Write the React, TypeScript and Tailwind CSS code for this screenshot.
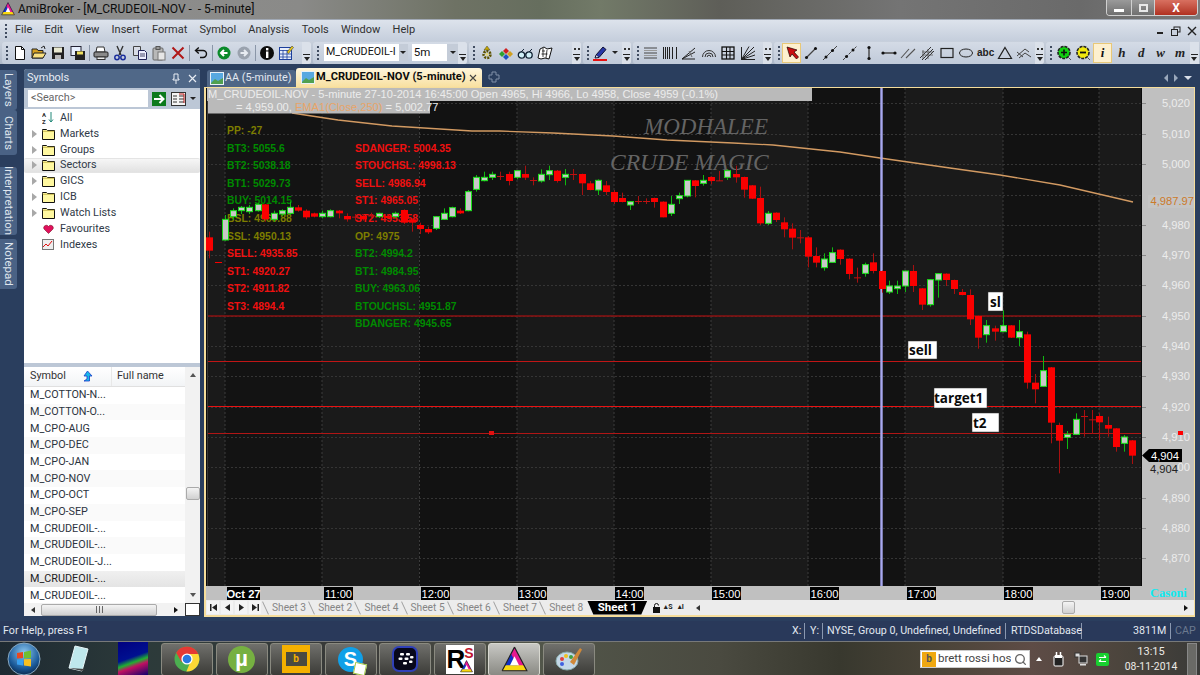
import React from "react";
import { Search } from "lucide-react";

type C = [number, number, number, number, number, string];
const z5: C[] = [
  [13,425,442,482,505,"d"],[38,516,516,518,518,"d"],[60,375,388,450,452,"u"],[84,355,362,380,390,"u"],[108,348,352,362,372,"u"],[133,345,352,365,372,"u"],[158,340,343,362,365,"u"],[181,342,343,388,395,"d"],[206,362,370,388,395,"u"],[230,358,362,372,378,"u"],[255,335,352,370,375,"u"],[279,345,352,362,365,"d"],[303,358,362,382,388,"d"],[327,368,370,380,382,"d"],[352,362,370,380,385,"u"],[376,358,362,380,382,"u"],[401,360,362,370,385,"d"],[425,370,378,388,395,"d"],[449,372,380,382,392,"c"],[473,372,378,388,392,"d"],[498,368,376,380,385,"c"],[522,368,370,380,384,"u"],[546,372,378,384,388,"d"],[571,365,370,380,385,"u"],[596,358,360,398,402,"d"],[620,385,388,398,425,"d"],[644,398,405,417,432,"d"],[668,410,417,427,432,"d"],[692,378,380,415,420,"u"],[716,355,370,388,390,"u"],[740,350,353,380,382,"u"],[765,355,362,370,372,"d"],[789,300,305,362,364,"u"],[814,255,262,298,305,"u"],[838,245,262,272,274,"u"],[862,245,253,262,270,"u"],[886,245,258,260,270,"c"],
];
const z6: C[] = [
  [26,215,222,243,256,"d"],[50,210,212,232,238,"u"],[75,197,222,233,240,"d"],[98,232,240,242,256,"c"],[122,208,223,243,248,"u"],[147,197,212,224,240,"u"],[172,210,212,243,248,"d"],[196,207,223,232,256,"u"],[220,207,222,224,240,"c"],[245,221,222,250,285,"d"],[270,243,250,270,271,"d"],[293,238,241,270,285,"u"],[317,243,256,276,285,"d"],[341,270,276,306,312,"d"],[366,278,294,306,307,"d"],[390,303,305,315,330,"u"],[414,288,303,305,312,"c"],[438,295,303,305,312,"c"],[462,293,294,306,323,"d"],[488,304,305,352,352,"d"],[512,288,313,340,348,"u"],[536,278,287,296,312,"u"],[560,240,241,288,292,"u"],[586,240,241,258,292,"d"],[609,225,241,250,257,"u"],[633,229,231,243,253,"d"],[657,213,241,243,243,"c"],[681,208,212,232,240,"u"],[707,197,222,232,248,"d"],[731,230,231,269,293,"d"],[755,255,256,296,297,"d"],[779,260,294,370,375,"d"],[804,333,340,370,375,"u"],[828,337,338,360,366,"d"],[852,352,367,388,412,"d"],[876,370,386,413,448,"d"],[900,390,412,414,430,"c"],
];
const z7: C[] = [
  [85,18,22,80,112,"d"],[109,52,78,98,112,"d"],[133,70,87,113,122,"u"],[157,52,68,97,98,"u"],[181,58,59,87,104,"d"],[206,85,86,132,148,"d"],[230,113,142,144,158,"c"],[254,98,104,130,140,"u"],[278,70,97,123,130,"d"],[305,122,123,177,188,"d"],[328,152,168,186,192,"u"],[352,152,168,176,192,"u"],[376,122,123,168,186,"u"],[400,105,123,168,186,"d"],[426,174,175,224,240,"d"],[450,148,149,224,230,"u"],[474,130,131,150,203,"u"],[498,130,131,150,168,"d"],[523,149,150,177,192,"d"],[547,177,186,195,196,"d"],[571,178,195,268,285,"d"],[595,257,258,323,356,"d"],[619,270,287,314,338,"u"],[644,287,295,305,332,"d"],[668,240,287,305,306,"u"],[692,285,286,323,324,"d"],[716,270,305,323,348,"u"],[740,305,313,458,476,"d"],[765,432,458,478,520,"d"],[789,378,422,469,470,"u"],[813,411,412,578,640,"d"],[837,578,585,632,730,"d"],[862,603,613,622,657,"u"],[887,550,568,613,615,"u"],[911,540,558,560,620,"c"],[935,540,568,570,612,"c"],[958,550,558,577,630,"d"],[984,560,585,596,620,"d"],[1008,594,595,651,665,"d"],[1032,615,621,640,665,"u"],[1056,630,631,677,702,"d"],
];
const conv = (a: C[], ox: number, oy: number) => a.map(([x, wt, t, b, wb, k]) => ({ x: Math.round(x / 3 + ox), wt: wt / 3 + oy, t: t / 3 + oy, b: b / 3 + oy, wb: wb / 3 + oy, k }));
const candles = [...conv(z5, 205, 90), ...conv(z6, 500, 100), ...conv(z7, 780, 230)];

const vGrid = [225, 322, 419.5, 517, 614, 711, 808, 905, 1003, 1099];
const bands: [number, number, string][] = [[207,225,"#1a1a1a"],[225,322,"#131313"],[322,419,"#1a1a1a"],[419,517,"#121212"],[517,614,"#191919"],[614,711,"#121212"],[711,808,"#1a1a1a"],[808,905,"#121212"],[905,1003,"#1a1a1a"],[1003,1099,"#121212"],[1099,1141,"#1a1a1a"]];
const yLabels: [string, number][] = [["5,020",103],["5,010",134],["5,000",164],["4,980",225],["4,970",255],["4,960",285],["4,950",316],["4,940",346],["4,930",376],["4,920",407],["4,910",437],["4,890",498],["4,880",528],["4,870",558]];
const hours: [string, number, number][] = [["11:00",324,29],["12:00",421,29],["13:00",518,29],["14:00",615,29],["15:00",712,29],["16:00",810,29],["17:00",907,29],["18:00",1004,29],["19:00",1101,29]];

const leftCol: [string, string, number][] = [
  ["PP: -27","#7d7d00",130],["BT3: 5055.6","#008a00",147.5],["BT2: 5038.18","#008a00",165],["BT1: 5029.73","#008a00",182.5],["BUY: 5014.15","#008a00",200],["BSL: 4960.88","#7d7d00",218],["SSL: 4950.13","#7d7d00",235.5],["SELL: 4935.85","#f01010",253],["ST1: 4920.27","#f01010",270.5],["ST2: 4911.82","#f01010",288],["ST3: 4894.4","#f01010",305.5],
];
const rightCol: [string, string, number][] = [
  ["SDANGER: 5004.35","#f01010",147.5],["STOUCHSL: 4998.13","#f01010",165],["SELL: 4986.94","#f01010",182.5],["ST1: 4965.05","#f01010",200],["ST2: 4953.58","#f01010",218],["OP: 4975","#7d7d00",235.5],["BT2: 4994.2","#008a00",253],["BT1: 4984.95","#008a00",270.5],["BUY: 4963.06","#008a00",288],["BTOUCHSL: 4951.87","#008a00",305.5],["BDANGER: 4945.65","#008a00",323],
];

function Chart() {
  return (
    <svg viewBox="206 88 988 512" className="block w-[988px] h-[512px] shrink-0">
      <rect x="206" y="88" width="988" height="512" fill="#c0c0c0" />
      <rect x="206" y="88" width="936" height="498" fill="#0b0b0b" />
      {bands.map(([a, b, c]) => <rect key={a} x={a} y="88" width={b - a} height="498" fill={c} />)}
      <line x1="207.5" y1="88" x2="207.5" y2="586" stroke="#3a3a3a" />
      {vGrid.map((x) => <line key={x} x1={x} y1="88" x2={x} y2="586" stroke="#3c3c3c" strokeDasharray="2 2" />)}
      {[103,134,164,195,225,255,285,316,346,376,407,437,467,498,528,558].map((y) => <line key={y} x1="207" y1={y + 0.5} x2="1141" y2={y + 0.5} stroke="#353535" strokeDasharray="2 2" />)}
      <g className="font-['Liberation_Serif',serif] italic" fill="#646464">
        <text x="644" y="134" className="text-[23px]">MODHALEE</text>
        <text x="610" y="170" className="text-[23.5px]">CRUDE MAGIC</text>
      </g>
      <polyline fill="none" stroke="#d29a62" strokeWidth="1.3" points="292,113 338,120 392,126 472,131 500,131 553,133 613,136 667,140 733,143 773,145 840,152 880,158 950,168 1000,175 1060,185 1133,202" />
      <g className="font-['Liberation_Sans',Arial,sans-serif] font-bold text-[10.4px]">
        {leftCol.map(([t, c, y]) => <text key={t} x="227" y={y + 4} fill={c}>{t}</text>)}
        {rightCol.map(([t, c, y]) => <text key={t} x="355" y={y + 4} fill={c}>{t}</text>)}
      </g>
      <line x1="208" y1="316" x2="1141" y2="316" stroke="#8c1212" strokeWidth="1.6" />
      <line x1="208" y1="361.5" x2="1141" y2="361.5" stroke="#c01616" />
      <line x1="208" y1="406.5" x2="1141" y2="406.5" stroke="#e81212" strokeWidth="1.2" />
      <line x1="208" y1="433.5" x2="1141" y2="433.5" stroke="#b01616" />
      <rect x="489" y="431" width="5" height="4" fill="#e01010" />
      <line x1="881.5" y1="88" x2="881.5" y2="586" stroke="#a8a8f0" strokeWidth="2.4" />
      {candles.map((c, i) => {
        const up = c.k === "u";
        const cross = c.k === "c";
        return (
          <g key={i}>
            <line x1={c.x + 0.5} x2={c.x + 0.5} y1={c.wt} y2={c.wb} stroke={up ? "#10b810" : "#a81010"} />
            {cross ? (
              <line x1={c.x - 3} x2={c.x + 4} y1={c.t + 0.5} y2={c.t + 0.5} stroke="#c01010" />
            ) : up ? (
              <rect x={c.x - 2.5} y={c.t} width="6" height={Math.max(c.b - c.t, 2)} fill="#c8c8c8" stroke="#18e018" strokeWidth="1" />
            ) : (
              <rect x={c.x - 3} y={c.t} width="7" height={Math.max(c.b - c.t, 1)} fill="#fa0000" />
            )}
          </g>
        );
      })}
      <rect x="207" y="88" width="605" height="13" fill="#bababa" />
      <rect x="208" y="101" width="222" height="12.5" fill="#bababa" />
      <g className="font-['Liberation_Sans',Arial,sans-serif] text-[11.1px]" fill="#ececec">
        <text x="208" y="98">M_CRUDEOIL-NOV - 5-minute 27-10-2014 16:45:00 Open 4965, Hi 4966, Lo 4958, Close 4959 (-0.1%)</text>
        <text x="236" y="111">= 4,959.00, <tspan fill="#e8a468">EMA1(Close,250)</tspan> = 5,002.77</text>
      </g>
      <g className="font-['Open_Sans',sans-serif] font-bold" fill="#0a0a0a">
        {([["sl",988,292,15,19,990,307],["sell",908,341,29,18,909,355],["target1",934,388,53,20,934,403],["t2",972,413,27,19,973,428]] as [string,number,number,number,number,number,number][]).map(([t,x,y,w,h,tx,ty]) => (
          <g key={t}>
            <rect x={x} y={y} width={w} height={h} fill="#fff" stroke="#333" strokeWidth="0.5" />
            <text x={tx} y={ty} className="text-[13.5px]">{t}</text>
          </g>
        ))}
      </g>
      <g className="font-['Liberation_Sans',Arial,sans-serif] text-[11.2px]">
        {yLabels.map(([t, y]) => (
          <g key={t}>
            <line x1="1142" x2="1146" y1={y + 0.5} y2={y + 0.5} stroke="#8a8a8a" />
            <text x="1190" y={y + 4} textAnchor="end" fill="#ececec">{t}</text>
          </g>
        ))}
        <rect x="1148" y="195" width="46" height="13" fill="#c4c4c4" />
        <text x="1194" y="205" textAnchor="end" fill="#cc7a2a">4,987.97</text>
        <text x="1190" y="471" textAnchor="end" fill="#ececec">00</text>
        <text x="1178" y="473" textAnchor="end" fill="#222">4,904</text>
        <path d="M1142 455.5 L1149 449 H1182 V462 H1149 Z" fill="#000" />
        <text x="1179" y="460" textAnchor="end" fill="#fff">4,904</text>
        <rect x="1178" y="431" width="5" height="4" fill="#f00" />
        {hours.map(([t, x, w]) => (
          <g key={t}>
            <rect x={x} y="587" width={w} height="13" fill="#000" />
            <text x={x + 14.5} y="597.5" textAnchor="middle" fill="#fff">{t}</text>
          </g>
        ))}
        <rect x="227" y="587" width="33" height="13" fill="#000" />
        <text x="243.5" y="597.5" textAnchor="middle" fill="#fff" className="font-bold">Oct 27</text>
      </g>
      <text x="1150" y="597" fill="#10eaf0" className="font-['Liberation_Serif',serif] font-bold text-[12.5px]">Casoni</text>
    </svg>
  );
}

const Ic = ({ children, w = 16 }: { children: React.ReactNode; w?: number }) => (
  <svg viewBox="0 0 16 16" width={w} height={16} className="block shrink-0">{children}</svg>
);
const B = ({ children, active }: { children: React.ReactNode; active?: boolean }) => (
  <div className={active ? "w-[19.4px] h-[20px] shrink-0 flex items-center justify-center bg-[#fdf0cf] border border-[#e8c878]" : "w-[19.4px] h-[20px] shrink-0 flex items-center justify-center"}>{children}</div>
);
const Grip = () => (
  <div className="w-[7px] ml-[1px] flex flex-col gap-[2px] items-center shrink-0">
    {[0,1,2,3].map((i) => <div key={i} className="w-[2px] h-[2px] bg-[#404c60]" />)}
  </div>
);
const Over = ({ dbl }: { dbl?: boolean }) => (
  <div className="w-[9px] h-full flex flex-col items-center justify-end pb-[3px] gap-[2px] bg-[#dbe1ea] shrink-0">
    {dbl && <div className="flex gap-[2px] mb-[2px]"><div className="w-[2px] h-[2px] bg-[#333]" /><div className="w-[2px] h-[2px] bg-[#333]" /></div>}
    <div className="w-[7px] h-[1px] bg-[#222]" />
    <div className="w-0 h-0 border-x-[3.5px] border-x-transparent border-t-[4px] border-t-[#222]" />
  </div>
);
const Sep = () => <div className="w-[1px] h-[16px] mx-[1.3px] bg-[#8a96a8] shrink-0" />;
const Seg = ({ children, w }: { children: React.ReactNode; w: string }) => (
  <div className={`${w} h-[22px] flex items-center rounded-[3px] bg-gradient-to-b from-[#d4dbe6] to-[#c0cad9] shrink-0 overflow-hidden`}>{children}</div>
);

const icons = {
  fnew: <Ic><path d="M3.5 1.5h6l3 3v10h-9z" fill="#fff" stroke="#111" /><path d="M9.5 1.5v3h3" fill="none" stroke="#111" /></Ic>,
  open: <Ic><path d="M1 4h5l1 1.5h5V13H1z" fill="#d4a020" stroke="#222" /><path d="M3 8h12l-3 5H1z" fill="#f8e080" stroke="#222" /><path d="M10 3l3-2 1 3" fill="none" stroke="#222" /></Ic>,
  save: <Ic><rect x="2" y="2" width="12" height="12" fill="#222" /><rect x="4" y="2.5" width="8" height="5" fill="#e8e8d0" /><rect x="5" y="10" width="6" height="4" fill="#bbb" /></Ic>,
  msave: <Ic><rect x="1" y="1.5" width="10" height="9" fill="#e8f0ff" stroke="#223" /><rect x="5" y="6" width="10" height="9" fill="#222" /><rect x="7" y="6.5" width="6" height="3" fill="#f0e060" /></Ic>,
  print: <Ic><path d="M4 2h7l1 5H3z" fill="#fff" stroke="#333" /><rect x="1" y="7" width="14" height="5" rx="1" fill="#8a8a8a" stroke="#222" /><rect x="4" y="12" width="8" height="2.5" fill="#eee" stroke="#333" /></Ic>,
  cut: <Ic><path d="M5 1l4 9M11 1L7 10" stroke="#333" strokeWidth="1.4" /><circle cx="5" cy="12.5" r="2.2" fill="none" stroke="#1c2f9c" strokeWidth="1.5" /><circle cx="11" cy="12.5" r="2.2" fill="none" stroke="#1c2f9c" strokeWidth="1.5" /></Ic>,
  copy: <Ic><path d="M1.5 1.5h7v9h-7z" fill="#d8dce6" stroke="#444" /><path d="M6.5 5.5h6l2 2v7h-8z" fill="#eef" stroke="#225" /><path d="M8 9h5M8 11h5" stroke="#446" /></Ic>,
  paste: <Ic><rect x="2" y="3" width="10" height="12" rx="1" fill="#b8b8b8" stroke="#666" /><rect x="5" y="1.5" width="4" height="3" fill="#999" stroke="#555" /><rect x="7" y="7" width="7" height="8" fill="#e6e6e6" stroke="#777" /></Ic>,
  del: <Ic><path d="M2.5 2.5l11 11M13.5 2.5l-11 11" stroke="#b01818" strokeWidth="2" /></Ic>,
  undo: <Ic><path d="M3 5.5h7a3.5 3.5 0 0 1 0 7H7" fill="none" stroke="#111" strokeWidth="1.4" /><path d="M5.8 2.5L2.5 5.5l3.3 3" fill="none" stroke="#111" strokeWidth="1.4" /></Ic>,
  back: <Ic><circle cx="8" cy="8" r="6.5" fill="#0a8a2a" /><path d="M11.5 8H5.5M8 5L5 8l3 3" fill="none" stroke="#fff" strokeWidth="2" /></Ic>,
  fwd: <Ic><circle cx="8" cy="8" r="6.5" fill="#9aa2ae" /><path d="M4.5 8h6M8 5l3 3-3 3" fill="none" stroke="#e8ecf2" strokeWidth="2" /></Ic>,
  info: <Ic><circle cx="8" cy="8" r="7" fill="#0c0c0c" /><rect x="7" y="3" width="2.4" height="2.4" fill="#fff" /><rect x="7" y="6.5" width="2.4" height="6.5" fill="#fff" /></Ic>,
  calc: <Ic><rect x="1.5" y="2.5" width="12" height="12" fill="#e8eefc" stroke="#1c3f9c" /><path d="M1.5 5.5h12M1.5 9h12M1.5 12h12M5 5v9M9 5v9" stroke="#1c3f9c" strokeWidth="0.8" /><path d="M9 7l5-6 1.5 1.5-5 6z" fill="#e8c820" stroke="#443" strokeWidth="0.6" /></Ic>,
  gear: <Ic><circle cx="8" cy="9.5" r="3.4" fill="none" stroke="#5c5200" strokeWidth="2.6" strokeDasharray="2 1" /><path d="M8 1l3 4H5z" fill="#c8a800" stroke="#443" strokeWidth=".5" /><circle cx="8" cy="9.5" r="1.4" fill="#e8d870" /></Ic>,
  hearts: <Ic><path d="M8 3l3 3-3 3-3-3z" fill="#d02020" /><path d="M4 6l3 3-3 3-3-3z" fill="#30a030" /><path d="M12 6l3 3-3 3-3-3z" fill="#d0a020" /><path d="M8 9l3 3-3 3-3-3z" fill="#2050c0" /></Ic>,
  glass: <Ic w={18}><circle cx="4.5" cy="10" r="3.2" fill="#d0f0f8" stroke="#123" strokeWidth="1.3" /><circle cx="12" cy="10" r="3.2" fill="#d0f0f8" stroke="#123" strokeWidth="1.3" /><path d="M7.5 9h1.5M4 7l3-3M12 7l3-3" stroke="#123" /></Ic>,
  map: <Ic><path d="M3 4l4-2 3 2 5-1-3 11-4-1-4 1-3-1z" fill="#fff" stroke="#111" /><path d="M5 6h3M4.5 9h6M6 3v9M10 5l-1 8" stroke="#111" strokeWidth=".8" /></Ic>,
  pen: <Ic><path d="M3 10l7-8 3 2.5-7 8z" fill="#2838a8" stroke="#113" /><path d="M3 10l-1 3 4-.5" fill="#dde" stroke="#113" /><rect x="0" y="14" width="14" height="2" fill="#e81010" /></Ic>,
  hl: <Ic><path d="M1 3h13M1 8h13M1 13h13" stroke="#444" /><path d="M1 5.5h13M1 10.5h13" stroke="#999" /></Ic>,
  vl: <Ic><path d="M1.5 2v12M3.5 2v12M5.5 2v12M7.5 2v12M10.5 2v12M14.5 2v12" stroke="#222" /></Ic>,
  ang: <Ic><path d="M1 14L14 3M1 14L14 7M1 14h13" stroke="#222" /><path d="M8 6l3 6" stroke="#666" /></Ic>,
  arc: <Ic><path d="M1.5 12a6.5 6.5 0 0 1 13 0M4 12a4 4 0 0 1 8 0M6.2 12a1.8 1.8 0 0 1 3.6 0" fill="none" stroke="#333" /></Ic>,
  grid: <Ic><rect x="2" y="2" width="12" height="12" fill="none" stroke="#111" strokeWidth="1.3" /><path d="M2 6.5h12M2 10h12M6.5 2v12M10 2v12" stroke="#111" strokeWidth="1.1" /></Ic>,
  fan: <Ic><path d="M1.5 2v12.5H15M1.5 14.5L14 2M1.5 14.5L15 6M1.5 14.5L15 10M1.5 14.5L9 1.5" fill="none" stroke="#222" /></Ic>,
  cur: <Ic><path d="M3 2l3 10 2-3 4.5 5 2-2L10 7l3-2z" fill="#c81010" stroke="#200" strokeWidth=".7" /></Ic>,
  l1: <Ic><path d="M3 13L13 3" stroke="#444" strokeWidth="1.2" /><circle cx="3.5" cy="12.5" r="1.5" fill="#111" /><circle cx="12.5" cy="3.5" r="1.5" fill="#111" /></Ic>,
  l2: <Ic><path d="M1 15L15 1" stroke="#444" /><circle cx="4" cy="12" r="1.5" fill="#111" /><circle cx="10.5" cy="5.5" r="1.5" fill="#111" /></Ic>,
  l3: <Ic><path d="M1 15L15 1" stroke="#444" strokeDasharray="3 1" /><circle cx="4.5" cy="11.5" r="1.5" fill="#111" /><circle cx="11" cy="5" r="1.5" fill="#111" /></Ic>,
  vs: <Ic><path d="M8 3v10" stroke="#444" strokeWidth="1.4" /><circle cx="8" cy="2.5" r="1.6" fill="#111" /><circle cx="8" cy="13.5" r="1.6" fill="#111" /></Ic>,
  hs: <Ic><path d="M2 8h12" stroke="#444" strokeWidth="1.4" /><circle cx="2" cy="8" r="1.6" fill="#111" /><circle cx="14" cy="8" r="1.6" fill="#111" /></Ic>,
  par: <Ic><path d="M1 13L9 4M6 13l9-9" stroke="#555" strokeWidth="1.1" /></Ic>,
  fib: <Ic><path d="M1 13L12 2M3 15L14 4M6 15l9-9" stroke="#333" /><path d="M3 7h11M3 10h11M4 5v9M9 4v10" stroke="#555" strokeWidth=".8" /></Ic>,
  rect: <Ic><rect x="2" y="3.5" width="12" height="9" fill="none" stroke="#222" strokeWidth="1.2" /></Ic>,
  ell: <Ic><ellipse cx="8" cy="8" rx="6.5" ry="4" fill="none" stroke="#222" /></Ic>,
  tri: <Ic><path d="M8 2.5L14.5 13.5H1.5z" fill="none" stroke="#222" strokeWidth="1.2" /></Ic>,
  wav: <Ic><path d="M1 11L9 4l4 3M3 13l6-5 6 4M1 7l6 5" fill="none" stroke="#444" /></Ic>,
  zp: <Ic><circle cx="8" cy="7.5" r="6" fill="#10d010" stroke="#222" strokeWidth="1.6" strokeDasharray="3 1" /><path d="M5 7.5h6M8 4.5v6" stroke="#111" strokeWidth="1.6" /><path d="M12.5 12.5l2.5 2.5" stroke="#555" /></Ic>,
  zm: <Ic><circle cx="8" cy="7.5" r="6" fill="#f0e810" stroke="#222" strokeWidth="1.6" strokeDasharray="3 1" /><path d="M5 7.5h6" stroke="#111" strokeWidth="1.8" /><path d="M12.5 12.5l2.5 2.5" stroke="#555" /></Ic>,
};

const Let = ({ t, d }: { t: string; d?: boolean }) => (
  <span className={`font-['Liberation_Serif',serif] italic font-bold text-[13px] ${d ? "text-[#111]" : "text-[#222]"}`}>{t}</span>
);
const Abc = () => <span className="font-['Liberation_Sans',sans-serif] font-bold text-[10px] text-[#222]">abc</span>;

const Folder = () => (
  <svg viewBox="0 0 13 12" width="13" height="12" className="shrink-0">
    <path d="M.5 2.5V1.5h4l1 1h7v9H.5z" fill="#fff8a0" stroke="#111" />
    <path d="M.8 3.3h11.5" stroke="#c8b850" />
  </svg>
);
const Arrow = () => <div className="w-0 h-0 border-y-[4px] border-y-transparent border-l-[5px] border-l-[#a8a8a8] shrink-0" />;

const tree: [string, string][] = [["All","az"],["Markets","f"],["Groups","f"],["Sectors","f"],["GICS","f"],["ICB","f"],["Watch Lists","f"],["Favourites","h"],["Indexes","i"]];
const list = ["M_COTTON-N...","M_COTTON-O...","M_CPO-AUG","M_CPO-DEC","M_CPO-JAN","M_CPO-NOV","M_CPO-OCT","M_CPO-SEP","M_CRUDEOIL-...","M_CRUDEOIL-...","M_CRUDEOIL-J...","M_CRUDEOIL-...","M_CRUDEOIL-..."];
const sheets = ["Sheet 3","Sheet 2","Sheet 4","Sheet 5","Sheet 6","Sheet 7","Sheet 8"];

const Tbtn = ({ children, active }: { children: React.ReactNode; active?: boolean }) => (
  <div className={active ? "w-[52px] h-[33px] shrink-0 rounded-[3px] border border-[#d8d8d0] bg-gradient-to-b from-[#c8c8c4] to-[#8a8a84] flex items-center justify-center" : "w-[52px] h-[33px] shrink-0 rounded-[3px] border border-[#8a8a80] bg-gradient-to-b from-[#70706c] to-[#3c3c38] flex items-center justify-center"}>{children}</div>
);
const AmiLogo = ({ s }: { s: number }) => (
  <svg viewBox="0 0 24 24" width={s} height={s} className="block">
    <path d="M1 22L12 1l11 21z" fill="#1030c8" />
    <path d="M12 1l11 21h-6L9 7z" fill="#e81890" />
    <path d="M1 22h22l-3-5H4z" fill="#f8d810" />
    <path d="M12 9l4 8H8z" fill="#fff" />
    <path d="M1 22L12 1M12 1l11 21H1" fill="none" stroke="#222" strokeWidth="1" />
  </svg>
);
const NavBtn = ({ d }: { d: string }) => (
  <div className="w-[12px] h-[13px] bg-[#f4f4f4] flex items-center justify-center shrink-0">
    <svg width="9" height="9" viewBox="0 0 9 9"><path d={d} fill="#222" /></svg>
  </div>
);

export default function App() {
  return (
    <div className="w-[1200px] h-[675px] overflow-hidden flex flex-col bg-[#2a3e5e] font-['Roboto',sans-serif] text-[10.8px] text-[#222]">
      {/* title */}
      <div className="h-[19px] shrink-0 flex items-start bg-[linear-gradient(90deg,#8f8f8f_0%,#8a8a88_25%,#6e7264_38%,#666e5e_45%,#727a68_50%,#5e5e58_60%,#747474_75%,#6a6a6a_90%,#7a7a7a_100%)] relative">
        <div className="ml-[1px] mt-[2px]"><AmiLogo s={14} /></div>
        <span className="ml-[3px] mt-[1px] text-[12px] leading-[17px] text-[#0c0c0c] whitespace-pre">AmiBroker - [M_CRUDEOIL-NOV -  - 5-minute]</span>
        <div className="ml-auto mr-[2px] w-[92px] h-[16px] flex rounded-b-[4px] overflow-hidden border border-t-0 border-[#d0d0d0] shrink-0">
          <div className="w-[25px] bg-gradient-to-b from-[#9a9a9a] to-[#707070] border-r border-[#d0d0d0] flex items-end justify-center pb-[3px]"><div className="w-[10px] h-[3px] bg-white" /></div>
          <div className="w-[23px] bg-gradient-to-b from-[#9a9a9a] to-[#707070] border-r border-[#d0d0d0] flex items-center justify-center"><div className="w-[9px] h-[8px] border-2 border-[#e8e8e8]" /></div>
          <div className="flex-1 bg-gradient-to-b from-[#d87060] to-[#b03020] flex items-center justify-center text-white font-bold text-[12px] leading-[12px]">X</div>
        </div>
      </div>
      {/* menu */}
      <div className="h-[22px] shrink-0 flex items-center bg-gradient-to-b from-[#dde3ec] to-[#c5cedc] border-t border-[#a0a8b4]">
        <div className="ml-[1px]"><Grip /></div>
        <div className="flex gap-[12.3px] ml-[6px] text-[11px] text-[#303030]">
          {["File","Edit","View","Insert","Format","Symbol","Analysis","Tools","Window","Help"].map((m) => <span key={m}>{m}</span>)}
        </div>
        <div className="ml-auto flex items-center gap-[6px] mr-[3px] text-[#222]">
          <svg width="9" height="9" viewBox="0 0 9 9"><rect x="1" y="6" width="6" height="2" fill="#222" /></svg>
          <svg width="10" height="10" viewBox="0 0 10 10"><rect x="3" y="1" width="6" height="5" fill="none" stroke="#222" /><rect x=".5" y="3.5" width="6" height="6" fill="#c8d0dc" stroke="#222" /></svg>
          <svg width="10" height="10" viewBox="0 0 10 10"><path d="M1 1l8 8M9 1l-8 8" stroke="#222" strokeWidth="1.4" /></svg>
        </div>
      </div>
      {/* toolbar */}
      <div className="h-[23px] shrink-0 flex items-center gap-[2px] pl-[2px] bg-gradient-to-b from-[#c8d0dc] to-[#aeb9c9]">
        <Seg w="w-[309px]">
          <Grip />
          <B>{icons.fnew}</B><B>{icons.open}</B><B>{icons.save}</B><B>{icons.msave}</B><Sep /><B>{icons.print}</B><B>{icons.cut}</B><B>{icons.copy}</B><B>{icons.paste}</B><B>{icons.del}</B><Sep /><B>{icons.undo}</B><Sep /><B>{icons.back}</B><B>{icons.fwd}</B><Sep /><B>{icons.info}</B><B>{icons.calc}</B>
          <div className="ml-auto h-full"><Over /></div>
        </Seg>
        <Seg w="w-[154px]">
          <div className="mr-[3px]"><Grip /></div>
          <div className="w-[76px] h-[17px] bg-white flex items-center pl-[2px] text-[10.7px] text-[#111] overflow-hidden whitespace-nowrap">M_CRUDEOIL-I</div>
          <div className="w-[9px] h-[17px] bg-[#c4ccd8] flex items-center justify-center"><div className="w-0 h-0 border-x-[3px] border-x-transparent border-t-[3px] border-t-[#222]" /></div>
          <div className="w-[36px] h-[17px] ml-[4px] bg-white flex items-center pl-[2px] text-[11.5px] text-[#111]">5m</div>
          <div className="w-[11px] h-[17px] bg-[#c4ccd8] flex items-center justify-center"><div className="w-0 h-0 border-x-[3px] border-x-transparent border-t-[3px] border-t-[#222]" /></div>
          <div className="ml-auto h-full"><Over /></div>
        </Seg>
        <Seg w="w-[112px]">
          <Grip />
          <B>{icons.gear}</B><B>{icons.hearts}</B><B>{icons.glass}</B><B>{icons.map}</B>
          <div className="ml-auto h-full"><Over dbl /></div>
        </Seg>
        <Seg w="w-[48px]">
          <Grip />
          <B>{icons.pen}</B>
          <div className="w-0 h-0 ml-[2px] border-x-[3px] border-x-transparent border-t-[3px] border-t-[#222]" />
          <div className="ml-auto h-full"><Over dbl /></div>
        </Seg>
        <Seg w="w-[139px]">
          <Grip />
          <B>{icons.hl}</B><B>{icons.vl}</B><B>{icons.ang}</B><B>{icons.arc}</B><B>{icons.grid}</B><B>{icons.fan}</B>
          <div className="ml-auto h-full"><Over dbl /></div>
        </Seg>
        <Seg w="w-[270px]">
          <Grip />
          <B active>{icons.cur}</B><B>{icons.l1}</B><B>{icons.l2}</B><B>{icons.l3}</B><B>{icons.vs}</B><B>{icons.hs}</B><B>{icons.par}</B><B>{icons.fib}</B><B>{icons.rect}</B><B>{icons.ell}</B><B><Abc /></B><B>{icons.tri}</B><B>{icons.wav}</B>
          <div className="ml-auto h-full"><Over dbl /></div>
        </Seg>
        <div className="w-[152px] h-[22px] flex items-center rounded-l-[3px] bg-gradient-to-b from-[#d4dbe6] to-[#c0cad9] shrink-0">
          <Grip />
          <B>{icons.zp}</B><B>{icons.zm}</B><B active><Let t="i" d /></B><B><Let t="h" /></B><B><Let t="d" /></B><B><Let t="w" /></B><B><Let t="m" /></B>
          <div className="ml-auto h-full"><Over /></div>
        </div>
      </div>
      {/* main */}
      <div className="h-[557px] shrink-0 flex bg-[#2a3e5e]">
        <div className="w-[24px] shrink-0 pt-[6px] flex flex-col text-[#dfe5ee] text-[11.5px]">
          <div className="w-[17px] h-[40px] rounded-r-[3px] bg-[#4a6285] flex items-center justify-center [writing-mode:vertical-rl]">Layers</div>
          <div className="w-[17px] h-[45px] rounded-r-[3px] bg-[#4a6285] flex items-center justify-center [writing-mode:vertical-rl]">Charts</div>
          <div className="w-[17px] h-[68px] mt-[12px] rounded-r-[3px] bg-[#4a6285] flex items-center justify-center [writing-mode:vertical-rl]">Interpretation</div>
          <div className="w-[17px] h-[50px] mt-[4px] rounded-r-[3px] bg-[#4a6285] flex items-center justify-center [writing-mode:vertical-rl]">Notepad</div>
        </div>
        <div className="w-[176px] h-[547px] mt-[5px] shrink-0 flex flex-col bg-[#bcc7d6] rounded-t-[3px]">
          <div className="h-[19px] shrink-0 flex items-center bg-[#506888] rounded-t-[3px] text-[#e8edf4] text-[11px] px-[3px]">
            <span>Symbols</span>
            <span className="ml-auto flex items-center gap-[8px] text-[#e8edf4]">
              <svg width="8" height="11" viewBox="0 0 8 11"><path d="M2 1h4v5h1v1H1V6h1zM4 7v4" fill="none" stroke="#e8edf4" /></svg>
              <svg width="9" height="9" viewBox="0 0 9 9"><path d="M1 1l7 7M8 1L1 8" stroke="#e8edf4" strokeWidth="1.2" /></svg>
            </span>
          </div>
          <div className="h-[21px] shrink-0 flex items-center pl-[4px] bg-[#bcc7d6]">
            <div className="w-[120px] h-[17px] bg-white flex items-center pl-[3px] text-[#666]">{"<Search>"}</div>
            <div className="w-[14px] h-[14px] ml-[4px] bg-[#0c7a1c] flex items-center justify-center">
              <svg width="12" height="10" viewBox="0 0 12 10"><path d="M1 5h9M6.5 1l4 4-4 4" fill="none" stroke="#fff" strokeWidth="2" /></svg>
            </div>
            <svg width="15" height="14" viewBox="0 0 15 14" className="ml-[5px]"><rect x=".5" y=".5" width="14" height="13" fill="#f4f4f4" stroke="#333" /><path d="M2 4h4M2 7h4M2 10h4M8 4h5M8 7h5M8 10h5" stroke="#333" /><path d="M8 2h5v9" stroke="#c01818" fill="none" /></svg>
            <div className="w-0 h-0 ml-[4px] border-x-[3px] border-x-transparent border-t-[3px] border-t-[#222]" />
          </div>
          <div className="h-[254px] shrink-0 bg-white flex flex-col pt-[1px]">
            {tree.map(([t, k]) => (
              <div key={t} className={t === "Sectors" ? "h-[15.85px] flex items-center bg-gradient-to-b from-[#f6f6f6] to-[#e2e2e2] rounded-[2px] border-y border-[#e4e4e4]" : "h-[15.85px] flex items-center"}>
                <div className="w-[9px] ml-[8px] shrink-0">{k === "f" && <Arrow />}</div>
                <div className="w-[14px] flex justify-center shrink-0">
                  {k === "f" && <Folder />}
                  {k === "az" && <svg width="12" height="13" viewBox="0 0 12 13"><text x="0" y="6" className="text-[6px] font-bold" fill="#333">A</text><text x="0" y="12.5" className="text-[6px] font-bold" fill="#333">Z</text><path d="M9 1v10M7 8.5L9 11l2-2.5" fill="none" stroke="#208878" /></svg>}
                  {k === "h" && <svg width="11" height="10" viewBox="0 0 11 10"><path d="M5.5 9.5L1 5C-.5 2.5 3.5-.5 5.5 2.5 7.5-.5 11.5 2.5 10 5z" fill="#e0105c" stroke="#601" strokeWidth=".5" /></svg>}
                  {k === "i" && <svg width="12" height="11" viewBox="0 0 12 11"><rect x=".5" y=".5" width="11" height="10" fill="#eee" stroke="#777" /><path d="M1 8l3-3 2 2 4-5" fill="none" stroke="#e01010" /></svg>}
                </div>
                <span className="ml-[5px] text-[#303a48]">{t}</span>
              </div>
            ))}
          </div>
          <div className="h-[4px] shrink-0 bg-[#bcc7d6]" />
          <div className="h-[236px] shrink-0 bg-white flex overflow-hidden">
            <div className="flex-1 flex flex-col min-w-0">
              <div className="h-[20px] shrink-0 flex items-center bg-gradient-to-b from-white to-[#f2f4f6] border-b border-[#e0e0e0] text-[#333]">
                <div className="w-[88px] flex items-center pl-[6px] border-r border-[#e8e8e8] h-full shrink-0">
                  <span>Symbol</span>
                  <svg width="13" height="13" viewBox="0 0 13 13" className="ml-[15px]"><path d="M6.5 1L11 6H8.5v5H3l3-2V6H3z" fill="#18b8e8" stroke="#1838c8" strokeWidth=".8" /></svg>
                </div>
                <span className="pl-[5px]">Full name</span>
              </div>
              <div className="flex-1 flex flex-col">
                {list.map((t, i) => (
                  <div key={i} className={i === 11 ? "h-[16.7px] shrink-0 flex items-center pl-[6px] bg-gradient-to-b from-[#f0f0f0] to-[#e4e4e4] text-[#222] whitespace-nowrap" : i % 2 ? "h-[16.7px] shrink-0 flex items-center pl-[6px] bg-[#fafafa] text-[#2c3440] whitespace-nowrap" : "h-[16.7px] shrink-0 flex items-center pl-[6px] text-[#2c3440] whitespace-nowrap"}>
                    <span>{t}</span>
                  </div>
                ))}
              </div>
            </div>
            <div className="w-[15px] shrink-0 flex flex-col items-center bg-[#f2f2f2]">
              <div className="w-0 h-0 mt-[6px] border-x-[3px] border-x-transparent border-b-[4px] border-b-[#555]" />
              <div className="w-[14px] h-[13px] mt-[110px] rounded-[2px] border border-[#aaa] bg-gradient-to-b from-[#f4f4f4] to-[#d0d0d0]" />
              <div className="w-0 h-0 mt-auto mb-[6px] border-x-[3px] border-x-transparent border-t-[4px] border-t-[#555]" />
            </div>
          </div>
          <div className="h-[13px] shrink-0 bg-[#f2f2f2] flex items-center">
            <div className="w-0 h-0 ml-[7px] border-y-[3px] border-y-transparent border-r-[4px] border-r-[#333]" />
            <div className="w-[116px] h-[12px] ml-[6px] rounded-[2px] border border-[#aaa] bg-gradient-to-b from-[#f4f4f4] to-[#d0d0d0] flex items-center justify-center">
              <svg width="9" height="7" viewBox="0 0 9 7"><path d="M1.500 0v7M4.500 0v7M7.500 0v7" stroke="#666" /></svg>
            </div>
            <div className="w-0 h-0 ml-[17px] border-y-[3px] border-y-transparent border-l-[4px] border-l-[#111]" />
            <div className="ml-auto w-[15px] h-[13px] border border-[#333] bg-white" />
          </div>
        </div>
        <div className="w-[991px] ml-[4px] mt-[5px] shrink-0 flex flex-col">
          <div className="h-[18px] shrink-0 flex items-end">
            <div className="w-[89px] h-[17px] ml-[3px] flex items-center pl-[3px] rounded-t-[3px] bg-[#4f6686] text-[#e2e8f0] whitespace-nowrap">
              <svg width="14" height="13" viewBox="0 0 14 13" className="shrink-0 mr-[1px]"><rect width="14" height="13" fill="#e8f0f8" /><rect x="1" y="1" width="12" height="11" fill="#58a8e0" /><path d="M1 11l4-4 3 2 5-3v6H1z" fill="#50a050" /></svg>
              AA (5-minute)
            </div>
            <div className="w-[186px] h-[19px] flex items-center pl-[5px] rounded-t-[3px] bg-gradient-to-b from-[#fff6dc] to-[#f8e0a0] text-[#0c0c0c] font-bold text-[11.1px] whitespace-nowrap">
              <svg width="14" height="13" viewBox="0 0 14 13" className="shrink-0 mr-[1px]"><rect width="14" height="13" fill="#e8f0f8" /><rect x="1" y="1" width="12" height="11" fill="#58a8e0" /><path d="M1 11l4-4 3 2 5-3v6H1z" fill="#50a050" /></svg>
              M_CRUDEOIL-NOV (5-minute)
              <svg width="8" height="8" viewBox="0 0 8 8" className="ml-auto mr-[5px]"><path d="M1 1l6 6M7 1L1 7" stroke="#444" strokeWidth="1.1" /></svg>
            </div>
            <svg width="12" height="12" viewBox="0 0 12 12" className="ml-[6px] mb-[4px]"><path d="M4 1h4v3h3v4H8v3H4V8H1V4h3z" fill="none" stroke="#8090a8" /></svg>
            <div className="ml-auto mr-[3px] mb-[5px] flex items-center gap-[6px]">
              <div className="w-0 h-0 border-y-[4px] border-y-transparent border-r-[4px] border-r-[#9aa8bc]" />
              <div className="w-0 h-0 border-y-[4px] border-y-transparent border-l-[4px] border-l-[#9aa8bc]" />
              <div className="w-0 h-0 border-x-[4px] border-x-transparent border-t-[4px] border-t-[#d8dee8]" />
            </div>
          </div>
          <div className="h-[530px] shrink-0 border border-[#f5dd9b] border-b-2 bg-[#f5dd9b] flex flex-col pl-[1px]">
            <Chart />
            <div className="h-[15px] shrink-0 flex items-center bg-[#ececec] relative">
              <div className="flex items-center w-[56px] gap-[2px] pl-[1px] shrink-0">
                <NavBtn d="M1 1h1.500v7H1zM8 1v7L3 4.500z" />
                <NavBtn d="M7 1v7L2 4.500z" />
                <NavBtn d="M2 1v7l5-3.500z" />
                <NavBtn d="M1 1v7l5-3.500zM6.500 1H8v7H6.500z" />
              </div>
              <div className="flex items-center text-[#858585] text-[10.2px] pl-[3px]">
                {sheets.map((s) => (
                  <div key={s} className="w-[46.2px] flex items-center shrink-0 whitespace-nowrap h-[14px]">
                    <div className="w-[1px] h-[14px] bg-[#a0a0a0] -rotate-[25deg] mr-[6px] shrink-0" />
                    <span>{s}</span>
                  </div>
                ))}
                <div className="h-[14px] w-[60px] -ml-[1px] bg-black text-white text-[11.5px] font-bold flex items-center justify-center [clip-path:polygon(0_0,100%_0,90%_100%,10%_100%)]">Sheet 1</div>
              </div>
              <div className="flex items-center ml-[5px] gap-[3px] text-[7px] text-[#222]">
                <svg width="9" height="10" viewBox="0 0 9 10"><rect x="1" y="4" width="7" height="6" fill="#111" /><path d="M2.500 4V2.500a2 2 0 0 1 4 0" fill="none" stroke="#111" /></svg>
                <span className="font-bold">▴S</span>
                <span className="font-bold ml-[2px]">▴I</span>
                <div className="w-0 h-0 ml-[9px] border-y-[3px] border-y-transparent border-r-[4px] border-r-[#333]" />
              </div>
              <div className="absolute left-[856px] top-[1px] w-[13px] h-[13px] rounded-[2px] border border-[#aaa] bg-gradient-to-b from-[#f4f4f4] to-[#d0d0d0]" />
              <div className="absolute right-[6px] top-[5px] w-0 h-0 border-y-[3px] border-y-transparent border-l-[4px] border-l-[#111]" />
            </div>
          </div>
        </div>
      </div>
      {/* status */}
      <div className="h-[20px] shrink-0 flex items-center text-[#e2e8f0] text-[10.7px] whitespace-nowrap bg-[#29395a] pl-[3px]">
        <span>For Help, press F1</span>
        <div className="ml-auto flex items-center h-[14px]">
          <span className="w-[13px] border-r border-[#8a98b0]">X:</span>
          <span className="w-[18px] text-right border-r border-[#8a98b0] pr-[3px]">Y:</span>
          <span className="w-[183px] pl-[4px] border-r border-[#8a98b0]">NYSE, Group 0, Undefined, Undefined</span>
          <span className="w-[76px] pl-[5px] border-r border-[#8a98b0]">RTDSDatabase</span>
          <span className="w-[44px] border-r border-[#8a98b0]" />
          <span className="w-[45px] pl-[7px] border-r border-[#8a98b0]">3811M</span>
          <span className="w-[29px] pl-[4px] text-[#6c7a90]">CAP</span>
        </div>
      </div>
      {/* taskbar */}
      <div className="flex-1 flex items-center bg-[linear-gradient(90deg,#1e2a32_0%,#2c3a3a_12%,#3a3a38_30%,#52564a_45%,#4a4a40_60%,#38382e_70%,#4a4438_78%,#5e4c46_86%,#4a443c_94%,#3a3a38_100%)] border-t border-[#77797a]">
        <svg width="34" height="34" viewBox="0 0 34 34" className="ml-[7px] shrink-0">
          <defs><radialGradient id="orb" cx="50%" cy="30%" r="70%"><stop offset="0%" stopColor="#8cc8f0" /><stop offset="70%" stopColor="#1a5a9a" /><stop offset="100%" stopColor="#0c2c50" /></radialGradient></defs>
          <circle cx="17" cy="17" r="16" fill="url(#orb)" stroke="#88a8c0" />
          <path d="M10 11l6-1v6l-6 .5z" fill="#e84820" />
          <path d="M17 10l7-1.5v7.5l-7 .4z" fill="#70c030" />
          <path d="M10 17.5l6-.3v6.3l-6-1z" fill="#38a0f0" />
          <path d="M17 17.2l7-.2v7.5l-7-1z" fill="#f8c020" />
        </svg>
        <div className="ml-[19px] w-[36px] h-[34px] flex items-center justify-center shrink-0">
          <svg width="24" height="28" viewBox="0 0 24 28"><path d="M9 1l13 3-6 22-13-3z" fill="#bfe8ec" stroke="#e8f6f8" /><path d="M3 23l13 3 3-2z" fill="#444" /></svg>
        </div>
        <div className="ml-[22px] w-[30px] h-[34px] shrink-0 bg-[linear-gradient(160deg,#000080_0%,#001090_45%,#20b030_58%,#c01060_68%,#000070_100%)]" />
        <div className="ml-[13px] flex gap-[2.5px]">
          <Tbtn>
            <svg width="26" height="26" viewBox="0 0 26 26"><circle cx="13" cy="13" r="12.5" fill="#4caf50" /><path d="M13 .5A12.5 12.5 0 0 0 2.2 6.8L7.5 16l5.5-8h11.3A12.5 12.5 0 0 0 13 .5z" fill="#e53935" /><path d="M24.3 8H13l5 4-5.6 13.5A12.5 12.5 0 0 0 24.3 8z" fill="#fdd835" /><circle cx="13" cy="13" r="5.6" fill="#fff" /><circle cx="13" cy="13" r="4.3" fill="#2a78e0" /></svg>
          </Tbtn>
          <Tbtn>
            <div className="w-[27px] h-[27px] rounded-full bg-[#76b041] flex items-center justify-center text-white font-bold text-[22px] leading-none font-['Liberation_Sans',sans-serif]">µ</div>
          </Tbtn>
          <Tbtn>
            <div className="w-[28px] h-[28px] bg-[#f4b000] flex items-center justify-center">
              <div className="w-[21px] h-[14px] bg-[#4a4a40] flex items-center justify-center text-[#f4b000] text-[10px] font-bold leading-none">b</div>
            </div>
          </Tbtn>
          <Tbtn>
            <div className="w-[25px] h-[25px] rounded-full bg-[#10a0e8] flex items-center justify-center text-white font-bold text-[20px] leading-none font-['Liberation_Sans',sans-serif] relative">
              S
              <div className="absolute -right-[3px] -bottom-[3px] w-[12px] h-[12px] bg-white border border-[#a0c840] rotate-12" />
            </div>
          </Tbtn>
          <Tbtn>
            <svg width="26" height="26" viewBox="0 0 26 26"><rect x="1" y="1" width="24" height="24" rx="6" fill="#08081a" stroke="#3040b8" strokeWidth="2" /><g fill="#fff"><rect x="8" y="7" width="4" height="2.5" rx="1" /><rect x="14" y="7" width="4" height="2.5" rx="1" /><rect x="6.5" y="11.5" width="4" height="2.5" rx="1" /><rect x="12.5" y="11.5" width="4" height="2.5" rx="1" /><rect x="18" y="10" width="3.5" height="2.5" rx="1" /><rect x="11" y="16" width="4" height="2.5" rx="1" /><rect x="17" y="14.5" width="3.5" height="2.5" rx="1" /></g></svg>
          </Tbtn>
          <Tbtn>
            <div className="w-[28px] h-[29px] bg-white relative overflow-hidden font-['Liberation_Sans',sans-serif] font-bold text-[26px] leading-[28px] text-black pl-[1px]">
              R
              <div className="absolute right-0 top-[1px] text-[#c01830] text-[14px] leading-[14px]">S</div>
              <div className="absolute right-[1px] bottom-[1px]"><AmiLogo s={13} /></div>
            </div>
          </Tbtn>
          <Tbtn active><AmiLogo s={27} /></Tbtn>
          <Tbtn>
            <svg width="28" height="26" viewBox="0 0 28 26"><ellipse cx="12" cy="15" rx="11" ry="9" fill="#c4d8e8" stroke="#8aa" /><circle cx="7" cy="13" r="2" fill="#e04040" /><circle cx="11" cy="10" r="2" fill="#f0c020" /><circle cx="16" cy="11" r="2" fill="#40a040" /><circle cx="7" cy="18" r="2" fill="#4060e0" /><path d="M15 16L25 2l2 1.5L19 19z" fill="#d08838" /></svg>
          </Tbtn>
        </div>
        <div className="ml-auto flex items-center h-full">
          <div className="w-[110px] h-[18px] bg-white flex items-center shrink-0 border border-[#ccc]">
            <div className="w-[14px] h-[15px] ml-[1px] bg-[#f0a810] flex items-center justify-center text-[#555] text-[10px] font-bold leading-none shrink-0">b</div>
            <span className="ml-[2px] text-[11.5px] text-[#444] whitespace-nowrap overflow-hidden">brett rossi hos</span>
            <Search size={13} className="ml-auto mr-[2px] shrink-0 text-[#666]" strokeWidth={2.5} />
          </div>
          <div className="ml-[6px] w-0 h-0 border-x-[3.5px] border-x-transparent border-b-[4px] border-b-white" />
          <svg width="14" height="16" viewBox="0 0 14 16" className="ml-[10px]"><rect x="2" y="5" width="9" height="10" rx="1" fill="#222" stroke="#fff" /><path d="M4.5 1v4M8.5 1v4" stroke="#fff" strokeWidth="1.5" /><rect x="3" y="4" width="7" height="3" fill="#fff" /></svg>
          <svg width="14" height="14" viewBox="0 0 14 14" className="ml-[8px]"><rect x="1" y="1" width="5" height="4" fill="#ddd" stroke="#333" /><rect x="5" y="4" width="8" height="7" fill="#333" stroke="#ddd" /><rect x="6" y="12" width="6" height="1.5" fill="#ddd" /></svg>
          <svg width="13" height="13" viewBox="0 0 13 13" className="ml-[8px]"><rect width="13" height="13" rx="2" fill="#18d030" /><path d="M3 4.5h7M8 2.5l2 2M10 8.5H3M5 6.5l-2 2" fill="none" stroke="#fff" strokeWidth="1.2" /></svg>
          <div className="ml-[17px] w-[50px] flex flex-col items-center text-[#eceae6] text-[10.4px] leading-[15px] whitespace-nowrap">
            <span className="text-[11px]">13:15</span>
            <span>08-11-2014</span>
          </div>
          <div className="ml-[11px] mr-[3px] w-[10px] h-[33px] border border-[#888] bg-[#6a6a66]" />
        </div>
      </div>
    </div>
  );
}
